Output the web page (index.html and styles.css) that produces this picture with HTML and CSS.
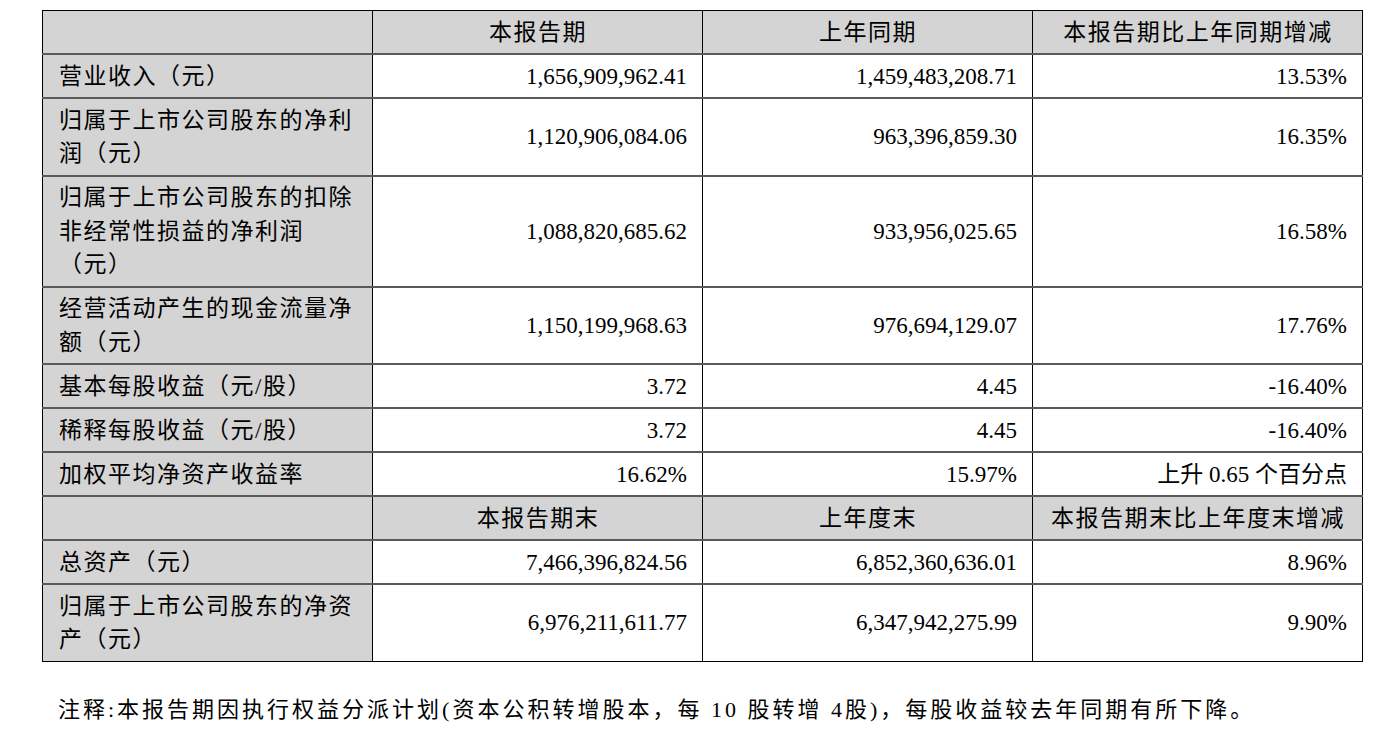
FILE: index.html
```html
<!DOCTYPE html>
<html lang="zh-CN">
<head>
<meta charset="utf-8">
<title>主要会计数据</title>
<link rel="stylesheet" href="styles.css">
</head>
<body>
<div class="page">
  <table class="fin">
    <colgroup>
      <col class="c1"><col class="c2"><col class="c3"><col class="c4">
    </colgroup>
    <tr class="head">
      <td class="label"></td>
      <td class="hd">本报告期</td>
      <td class="hd">上年同期</td>
      <td class="hd">本报告期比上年同期增减</td>
    </tr>
    <tr>
      <td class="label">营业收入（元）</td>
      <td class="num">1,656,909,962.41</td>
      <td class="num">1,459,483,208.71</td>
      <td class="num">13.53%</td>
    </tr>
    <tr>
      <td class="label">归属于上市公司股东的净利润（元）</td>
      <td class="num">1,120,906,084.06</td>
      <td class="num">963,396,859.30</td>
      <td class="num">16.35%</td>
    </tr>
    <tr>
      <td class="label">归属于上市公司股东的扣除非经常性损益的净利润（元）</td>
      <td class="num">1,088,820,685.62</td>
      <td class="num">933,956,025.65</td>
      <td class="num">16.58%</td>
    </tr>
    <tr>
      <td class="label">经营活动产生的现金流量净额（元）</td>
      <td class="num">1,150,199,968.63</td>
      <td class="num">976,694,129.07</td>
      <td class="num">17.76%</td>
    </tr>
    <tr>
      <td class="label">基本每股收益（元/股）</td>
      <td class="num">3.72</td>
      <td class="num">4.45</td>
      <td class="num">-16.40%</td>
    </tr>
    <tr>
      <td class="label">稀释每股收益（元/股）</td>
      <td class="num">3.72</td>
      <td class="num">4.45</td>
      <td class="num">-16.40%</td>
    </tr>
    <tr>
      <td class="label">加权平均净资产收益率</td>
      <td class="num">16.62%</td>
      <td class="num">15.97%</td>
      <td class="num">上升 0.65 个百分点</td>
    </tr>
    <tr class="head">
      <td class="label"></td>
      <td class="hd">本报告期末</td>
      <td class="hd">上年度末</td>
      <td class="hd">本报告期末比上年度末增减</td>
    </tr>
    <tr>
      <td class="label">总资产（元）</td>
      <td class="num">7,466,396,824.56</td>
      <td class="num">6,852,360,636.01</td>
      <td class="num">8.96%</td>
    </tr>
    <tr>
      <td class="label">归属于上市公司股东的净资产（元）</td>
      <td class="num">6,976,211,611.77</td>
      <td class="num">6,347,942,275.99</td>
      <td class="num">9.90%</td>
    </tr>
  </table>
  <p class="note">注释:本报告期因执行权益分派计划(资本公积转增股本，每 10 股转增 4股)，每股收益较去年同期有所下降。</p>
</div>
</body>
</html>
```

FILE: styles.css
```css
html, body {
  margin: 0;
  padding: 0;
  background: #ffffff;
}

.page {
  padding: 10px 0 0 42px;
  font-family: "Liberation Serif", "Noto Sans CJK SC", serif;
  color: #000000;
}

.fin {
  border-collapse: collapse;
  table-layout: fixed;
  width: 1321px;
  font-size: 23px;
  line-height: 33.5px;
}

.c1, .c2, .c3, .c4 {
  width: 330px;
}

.fin td {
  border-left: 1px solid #000000;
  border-right: 1px solid #000000;
  border-top: 2px solid #5a5a5a;
  border-bottom: 2px solid #5a5a5a;
  padding: 4.5px 15px 4px 16px;
  vertical-align: middle;
}

.fin tr:first-child td {
  border-top: 1px solid #000000;
}

.fin tr:last-child td {
  border-bottom: 1px solid #000000;
}

.label {
  background: #d4d4d4;
  letter-spacing: 1.5px;
  text-align: left;
  padding-right: 12px;
}

.head td {
  background: #d4d4d4;
}

.hd {
  text-align: center;
  letter-spacing: 1.5px;
}

.num {
  text-align: right;
}

.note {
  margin: 33px 0 0 16px;
  font-size: 22px;
  line-height: 30px;
  letter-spacing: 3px;
}
```
